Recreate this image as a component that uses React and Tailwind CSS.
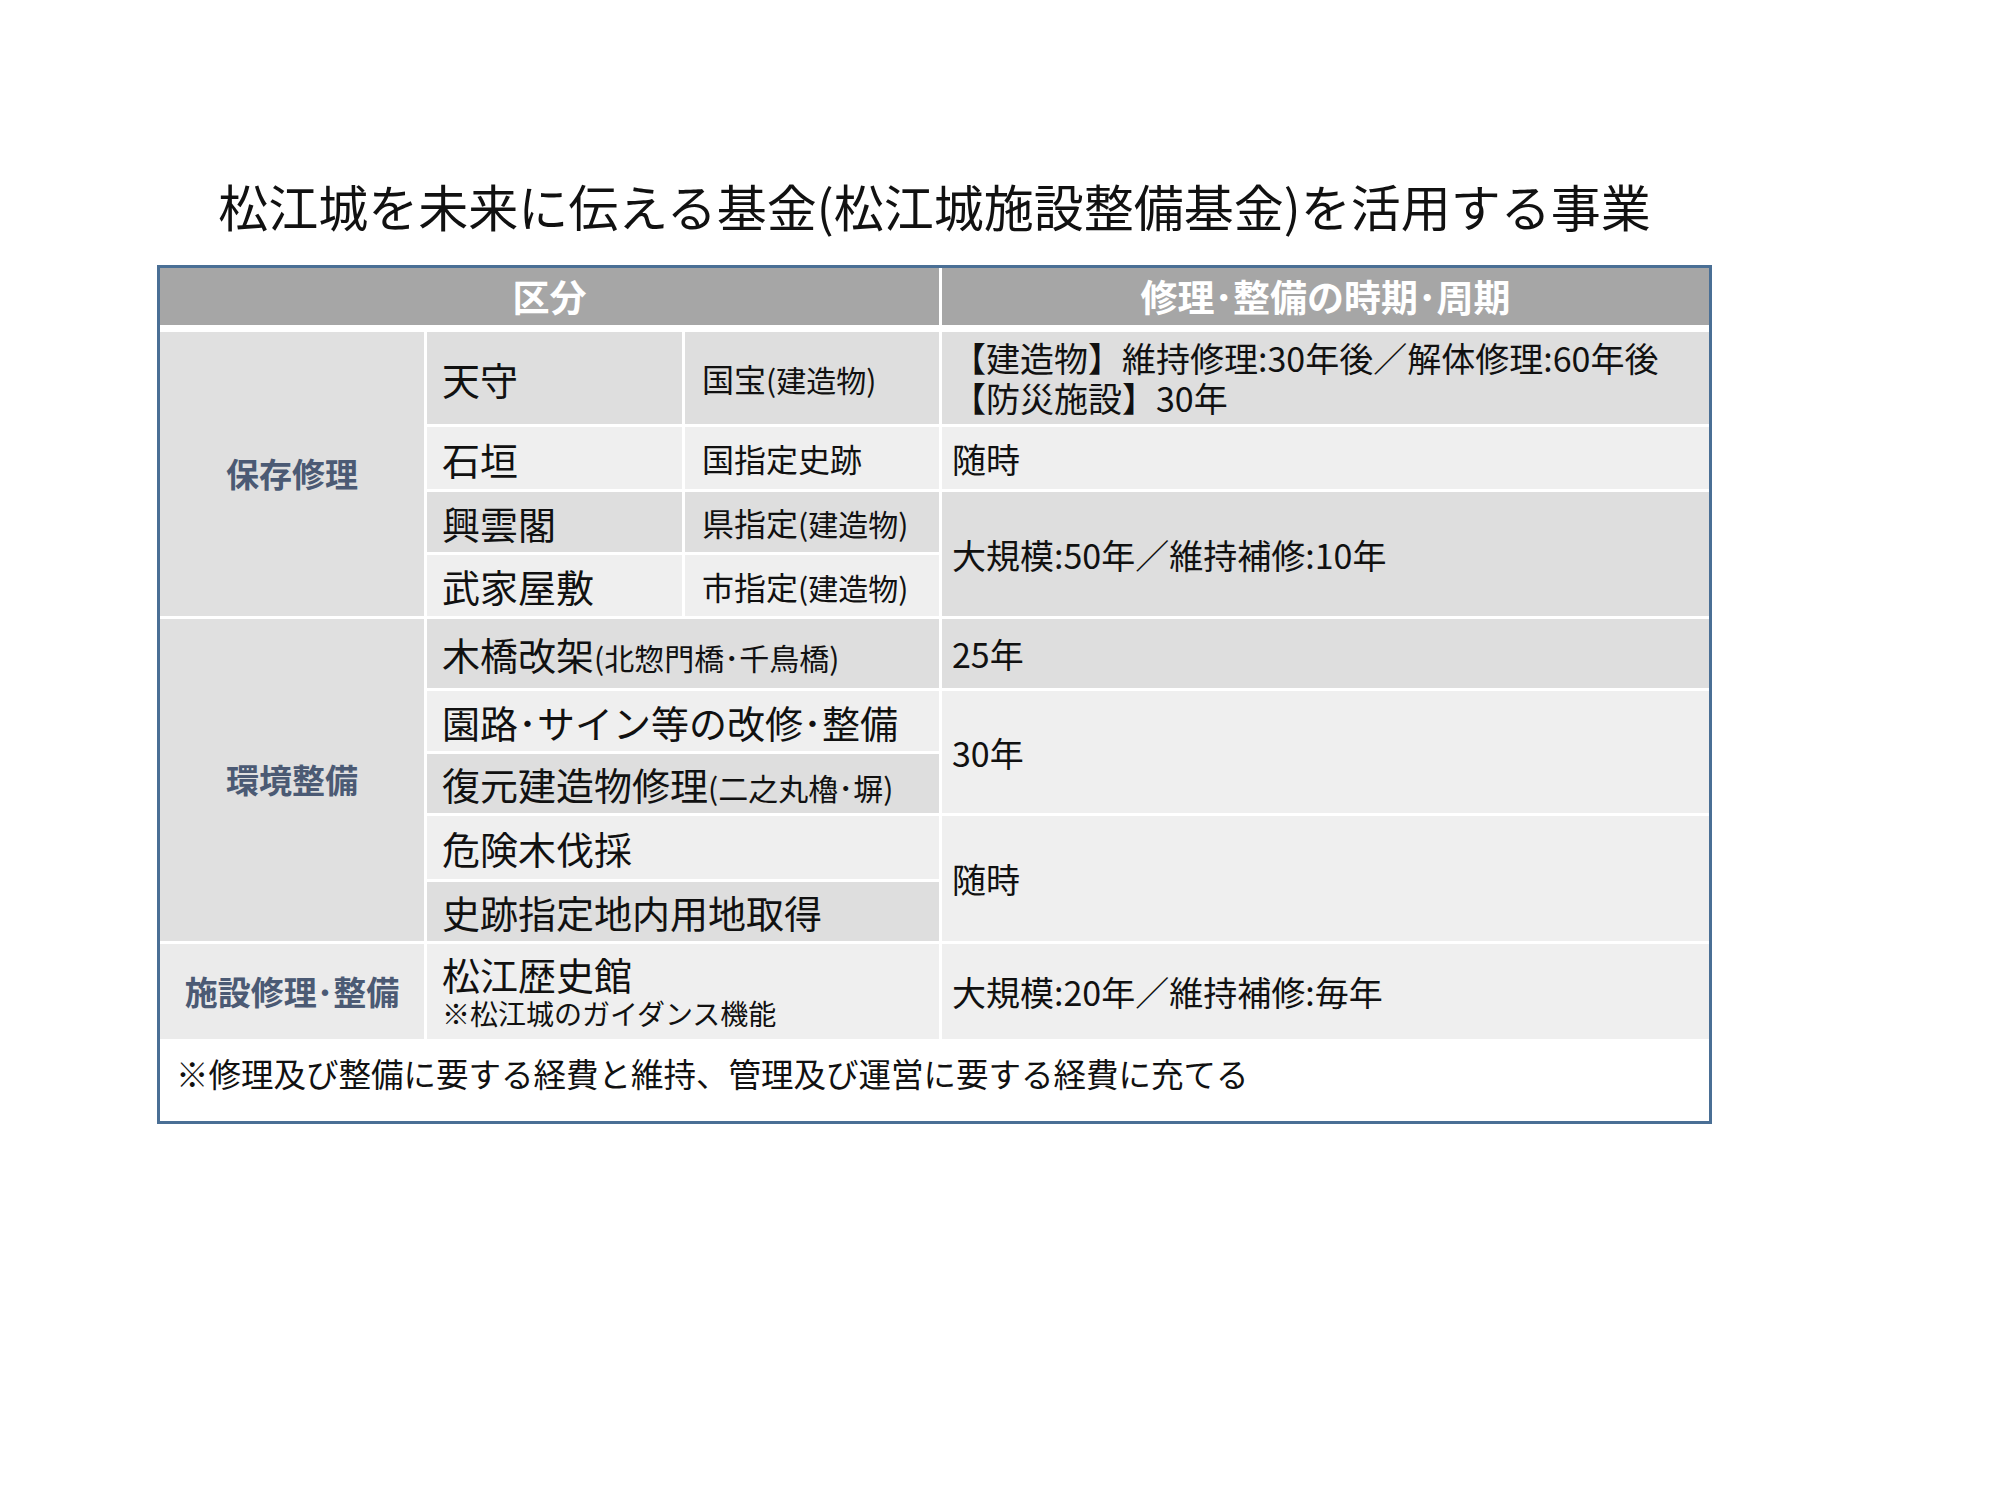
const DARK = 'bg-[#dedede]';
const LIGHT = 'bg-[#efefef]';

function Cat({ children, className = '' }) {
  return (
    <div className={`flex items-center justify-center text-[33px] font-bold text-[#4b5a74] ${className}`}>
      {children}
    </div>
  );
}

function Name({ children, className = '' }) {
  return (
    <div className={`flex items-center pl-[15px] text-[38px] text-[#111] ${className}`}>
      <span>{children}</span>
    </div>
  );
}

function Kind({ children, className = '' }) {
  return (
    <div className={`flex items-center pl-[17px] text-[32px] text-[#111] ${className}`}>
      <span>{children}</span>
    </div>
  );
}

function Period({ children, className = '' }) {
  return (
    <div className={`flex items-center pl-[10px] text-[34px] text-[#111] ${className}`}>
      {children}
    </div>
  );
}

const Small = ({ children }) => <span className="text-[30px]">{children}</span>;

export default function App() {
  return (
    <div className="w-[2000px] h-[1500px] bg-white font-['Noto_Sans_CJK_JP','Noto_Sans',sans-serif]">
      <div className="ml-[157px] w-[1555px] pt-[180px]">
        {/* Title */}
        <h1 className="text-center text-[50px] leading-[50px] font-normal text-[#111]">
          松江城を未来に伝える基金(松江城施設整備基金)を活用する事業
        </h1>

        {/* Table */}
        <div className="mt-[35px] border-[3px] border-[#4a6f95] bg-white">
          {/* Header */}
          <div className="grid grid-cols-[779px_1fr] gap-[3px] h-[57px]">
            <div className="flex items-center justify-center bg-[#a6a6a6] text-[37px] font-bold text-white">区分</div>
            <div className="flex items-center justify-center bg-[#a6a6a6] text-[37px] font-bold text-white">
              修理･整備の時期･周期
            </div>
          </div>

          {/* Body */}
          <div className="mt-[7px] grid grid-cols-[264px_255px_254px_1fr] grid-rows-[92px_62px_60px_61px_69px_60px_59px_63px_59px_95px] gap-[3px]">
            <Cat className="row-span-4 bg-[#e0e0e0]">保存修理</Cat>
            <Name className={DARK}>天守</Name>
            <Kind className={DARK}>国宝<Small>(建造物)</Small></Kind>
            <Period className={`${DARK} leading-[40px]`}>
              <div>
                <div>【建造物】維持修理:30年後／解体修理:60年後</div>
                <div>【防災施設】30年</div>
              </div>
            </Period>

            <Name className={LIGHT}>石垣</Name>
            <Kind className={LIGHT}>国指定史跡</Kind>
            <Period className={LIGHT}>随時</Period>

            <Name className={DARK}>興雲閣</Name>
            <Kind className={DARK}>県指定<Small>(建造物)</Small></Kind>
            <Period className={`row-span-2 ${DARK}`}>大規模:50年／維持補修:10年</Period>

            <Name className={LIGHT}>武家屋敷</Name>
            <Kind className={LIGHT}>市指定<Small>(建造物)</Small></Kind>

            <Cat className="row-span-5 bg-[#e0e0e0]">環境整備</Cat>
            <Name className={`col-span-2 ${DARK}`}>木橋改架<Small>(北惣門橋･千鳥橋)</Small></Name>
            <Period className={DARK}>25年</Period>

            <Name className={`col-span-2 ${LIGHT}`}>園路･サイン等の改修･整備</Name>
            <Period className={`row-span-2 ${LIGHT}`}>30年</Period>

            <Name className={`col-span-2 ${DARK}`}>復元建造物修理<Small>(二之丸櫓･塀)</Small></Name>

            <Name className={`col-span-2 ${LIGHT}`}>危険木伐採</Name>
            <Period className={`row-span-2 ${LIGHT}`}>随時</Period>

            <Name className={`col-span-2 ${DARK}`}>史跡指定地内用地取得</Name>

            <Cat className="bg-[#ebebeb]">施設修理･整備</Cat>
            <div className={`col-span-2 flex flex-col justify-center pl-[15px] text-[#111] ${LIGHT}`}>
              <div className="text-[38px] leading-[42px]">松江歴史館</div>
              <div className="text-[28px] leading-[36px]">※松江城のガイダンス機能</div>
            </div>
            <Period className={LIGHT}>大規模:20年／維持補修:毎年</Period>
          </div>

          {/* Note */}
          <div className="h-[82px] pl-[16px] pt-[10px] text-[32.5px] leading-[48px] text-[#111]">
            ※修理及び整備に要する経費と維持、管理及び運営に要する経費に充てる
          </div>
        </div>
      </div>
    </div>
  );
}
